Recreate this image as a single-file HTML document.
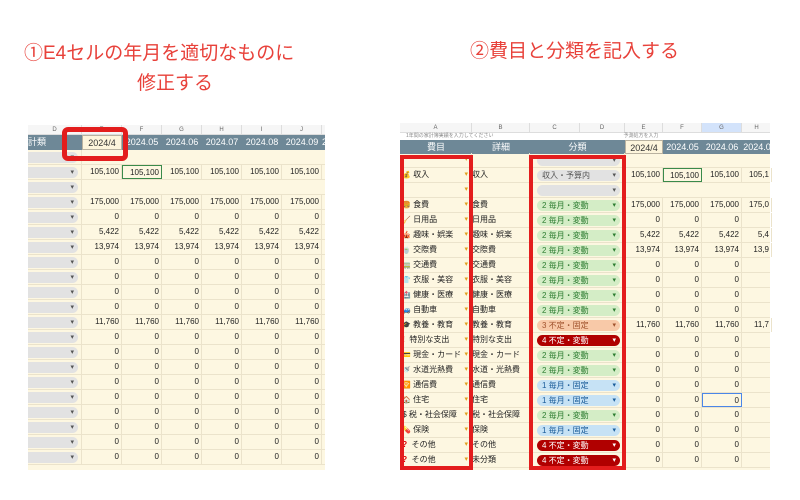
<!DOCTYPE html><html><head><meta charset="utf-8"><style>
*{margin:0;padding:0;box-sizing:border-box}
i{font-style:normal}
body{width:800px;height:500px;background:#fff;position:relative;overflow:hidden;font-family:"Liberation Sans","Noto Sans CJK JP",sans-serif}
.t{position:absolute;color:#e8413a;font-size:19px;white-space:nowrap}
.p{position:absolute;overflow:hidden;background:#fdf7e1}
.r{position:absolute;left:0;height:15px;border-bottom:1px solid #ebe3cb;width:100%;font-size:8px;color:#222}
.r span{position:absolute;top:0;height:100%;line-height:14px;white-space:nowrap;border-right:1px solid #ebe3cb;overflow:hidden}
.n{text-align:right;padding-right:2px}
.ch{position:absolute;left:0;width:100%;background:#f6f6f6;border-bottom:1px solid #ddd;font-size:6px;color:#666}
.ch span{position:absolute;top:0;text-align:center;border-right:1px solid #ddd;height:100%;line-height:10px}
.hb{position:absolute;left:0;width:100%;background:#6e8897;color:#fff;font-size:9px}
.hb span{position:absolute;top:0;height:100%;text-align:center;line-height:15px;white-space:nowrap;overflow:hidden}
.e4{background:#fdf5dc;color:#333;border:1px solid #b9b2a0}
.pl{position:absolute;top:2px;height:11px;border-radius:6px;line-height:11px;padding-left:5px;font-size:8px}
.pl:after{content:"▾";position:absolute;right:4px;top:0;font-size:7px}
.g{background:#e2e2e2;color:#555}.gr{background:#d4edc6;color:#2e7d32}.o{background:#f8c9a8;color:#a0522d}.rd{background:#b00000;color:#fff}.b{background:#c6e2f5;color:#1a5c99}
.box{position:absolute;border:4px solid #e31d1d}
.ar{color:#e0a020;position:absolute;right:3px;font-size:7px;font-weight:normal}
.ic{font-size:7px}
</style></head><body>
<div class="t" style="left:24px;top:38px">①E4セルの年月を適切なものに</div>
<div class="t" style="left:137px;top:68px">修正する</div>
<div class="t" style="left:470px;top:36px">②費目と分類を記入する</div>

<div class="p" style="left:28px;top:125px;width:297px;height:345px">
<div class="ch" style="top:0;height:10px"><span style="left:0;width:54px">D</span><span style="left:54px;width:40px">E</span><span style="left:94px;width:40px">F</span><span style="left:134px;width:40px">G</span><span style="left:174px;width:40px">H</span><span style="left:214px;width:40px">I</span><span style="left:254px;width:40px">J</span></div>
<div class="hb" style="top:10px;height:15px"><span style="left:0;width:54px;text-align:left">計類</span><span class="e4" style="left:54px;width:40px">2024/4</span><span style="left:94px;width:40px">2024.05</span><span style="left:134px;width:40px">2024.06</span><span style="left:174px;width:40px">2024.07</span><span style="left:214px;width:40px">2024.08</span><span style="left:254px;width:40px">2024.09</span><span style="left:294px;width:10px">20</span></div>
</div>

<div class="p" style="left:400px;top:123px;width:370px;height:347px">
<div class="ch" style="top:0;height:10px"><span style="left:0;width:72px">A</span><span style="left:72px;width:58px">B</span><span style="left:130px;width:50px">C</span><span style="left:180px;width:45px">D</span><span style="left:225px;width:38px">E</span><span style="left:263px;width:39px">F</span><span style="left:302px;width:40px;background:#d3e3fb">G</span><span style="left:342px;width:30px">H</span></div>
<div style="position:absolute;top:10px;left:0;width:100%;height:7px;background:#fff;font-size:5px;color:#888;line-height:7px;padding-left:6px">1年間の家計簿実績を入力してください　　　　　　　　　　　　　　　　　　　　　　　　　　予測処方を入力</div>
<div class="hb" style="top:17px;height:14px"><span style="left:0;width:72px">費目</span><span style="left:72px;width:58px">詳細</span><span style="left:130px;width:95px">分類</span><span class="e4" style="left:225px;width:38px">2024/4</span><span style="left:263px;width:39px">2024.05</span><span style="left:302px;width:40px">2024.06</span><span style="left:342px;width:30px">2024.0</span></div>
</div>

<div style="position:absolute;left:0;top:0">
<div style="position:absolute;left:28px;top:150px;width:297px">
<div class="r" style="top:0"><span style="left:0;width:54px"><i class="pl g" style="left:-6px;width:56px"></i></span></div>
<div class="r" style="top:15px"><span style="left:0;width:54px"><i class="pl g" style="left:-6px;width:56px"></i></span><span class="n" style="left:54px;width:40px">105,100</span><span class="n" style="left:94px;width:40px;border:1.5px solid #3a8a4a">105,100</span><span class="n" style="left:134px;width:40px">105,100</span><span class="n" style="left:174px;width:40px">105,100</span><span class="n" style="left:214px;width:40px">105,100</span><span class="n" style="left:254px;width:40px">105,100</span></div>
<div class="r" style="top:30px"><span style="left:0;width:54px"><i class="pl g" style="left:-6px;width:56px"></i></span></div>
<div class="r" style="top:45px"><span style="left:0;width:54px"><i class="pl g" style="left:-6px;width:56px"></i></span><span class="n" style="left:54px;width:40px">175,000</span><span class="n" style="left:94px;width:40px">175,000</span><span class="n" style="left:134px;width:40px">175,000</span><span class="n" style="left:174px;width:40px">175,000</span><span class="n" style="left:214px;width:40px">175,000</span><span class="n" style="left:254px;width:40px">175,000</span></div>
<div class="r" style="top:60px"><span style="left:0;width:54px"><i class="pl g" style="left:-6px;width:56px"></i></span><span class="n" style="left:54px;width:40px">0</span><span class="n" style="left:94px;width:40px">0</span><span class="n" style="left:134px;width:40px">0</span><span class="n" style="left:174px;width:40px">0</span><span class="n" style="left:214px;width:40px">0</span><span class="n" style="left:254px;width:40px">0</span></div>
<div class="r" style="top:75px"><span style="left:0;width:54px"><i class="pl g" style="left:-6px;width:56px"></i></span><span class="n" style="left:54px;width:40px">5,422</span><span class="n" style="left:94px;width:40px">5,422</span><span class="n" style="left:134px;width:40px">5,422</span><span class="n" style="left:174px;width:40px">5,422</span><span class="n" style="left:214px;width:40px">5,422</span><span class="n" style="left:254px;width:40px">5,422</span></div>
<div class="r" style="top:90px"><span style="left:0;width:54px"><i class="pl g" style="left:-6px;width:56px"></i></span><span class="n" style="left:54px;width:40px">13,974</span><span class="n" style="left:94px;width:40px">13,974</span><span class="n" style="left:134px;width:40px">13,974</span><span class="n" style="left:174px;width:40px">13,974</span><span class="n" style="left:214px;width:40px">13,974</span><span class="n" style="left:254px;width:40px">13,974</span></div>
<div class="r" style="top:105px"><span style="left:0;width:54px"><i class="pl g" style="left:-6px;width:56px"></i></span><span class="n" style="left:54px;width:40px">0</span><span class="n" style="left:94px;width:40px">0</span><span class="n" style="left:134px;width:40px">0</span><span class="n" style="left:174px;width:40px">0</span><span class="n" style="left:214px;width:40px">0</span><span class="n" style="left:254px;width:40px">0</span></div>
<div class="r" style="top:120px"><span style="left:0;width:54px"><i class="pl g" style="left:-6px;width:56px"></i></span><span class="n" style="left:54px;width:40px">0</span><span class="n" style="left:94px;width:40px">0</span><span class="n" style="left:134px;width:40px">0</span><span class="n" style="left:174px;width:40px">0</span><span class="n" style="left:214px;width:40px">0</span><span class="n" style="left:254px;width:40px">0</span></div>
<div class="r" style="top:135px"><span style="left:0;width:54px"><i class="pl g" style="left:-6px;width:56px"></i></span><span class="n" style="left:54px;width:40px">0</span><span class="n" style="left:94px;width:40px">0</span><span class="n" style="left:134px;width:40px">0</span><span class="n" style="left:174px;width:40px">0</span><span class="n" style="left:214px;width:40px">0</span><span class="n" style="left:254px;width:40px">0</span></div>
<div class="r" style="top:150px"><span style="left:0;width:54px"><i class="pl g" style="left:-6px;width:56px"></i></span><span class="n" style="left:54px;width:40px">0</span><span class="n" style="left:94px;width:40px">0</span><span class="n" style="left:134px;width:40px">0</span><span class="n" style="left:174px;width:40px">0</span><span class="n" style="left:214px;width:40px">0</span><span class="n" style="left:254px;width:40px">0</span></div>
<div class="r" style="top:165px"><span style="left:0;width:54px"><i class="pl g" style="left:-6px;width:56px"></i></span><span class="n" style="left:54px;width:40px">11,760</span><span class="n" style="left:94px;width:40px">11,760</span><span class="n" style="left:134px;width:40px">11,760</span><span class="n" style="left:174px;width:40px">11,760</span><span class="n" style="left:214px;width:40px">11,760</span><span class="n" style="left:254px;width:40px">11,760</span></div>
<div class="r" style="top:180px"><span style="left:0;width:54px"><i class="pl g" style="left:-6px;width:56px"></i></span><span class="n" style="left:54px;width:40px">0</span><span class="n" style="left:94px;width:40px">0</span><span class="n" style="left:134px;width:40px">0</span><span class="n" style="left:174px;width:40px">0</span><span class="n" style="left:214px;width:40px">0</span><span class="n" style="left:254px;width:40px">0</span></div>
<div class="r" style="top:195px"><span style="left:0;width:54px"><i class="pl g" style="left:-6px;width:56px"></i></span><span class="n" style="left:54px;width:40px">0</span><span class="n" style="left:94px;width:40px">0</span><span class="n" style="left:134px;width:40px">0</span><span class="n" style="left:174px;width:40px">0</span><span class="n" style="left:214px;width:40px">0</span><span class="n" style="left:254px;width:40px">0</span></div>
<div class="r" style="top:210px"><span style="left:0;width:54px"><i class="pl g" style="left:-6px;width:56px"></i></span><span class="n" style="left:54px;width:40px">0</span><span class="n" style="left:94px;width:40px">0</span><span class="n" style="left:134px;width:40px">0</span><span class="n" style="left:174px;width:40px">0</span><span class="n" style="left:214px;width:40px">0</span><span class="n" style="left:254px;width:40px">0</span></div>
<div class="r" style="top:225px"><span style="left:0;width:54px"><i class="pl g" style="left:-6px;width:56px"></i></span><span class="n" style="left:54px;width:40px">0</span><span class="n" style="left:94px;width:40px">0</span><span class="n" style="left:134px;width:40px">0</span><span class="n" style="left:174px;width:40px">0</span><span class="n" style="left:214px;width:40px">0</span><span class="n" style="left:254px;width:40px">0</span></div>
<div class="r" style="top:240px"><span style="left:0;width:54px"><i class="pl g" style="left:-6px;width:56px"></i></span><span class="n" style="left:54px;width:40px">0</span><span class="n" style="left:94px;width:40px">0</span><span class="n" style="left:134px;width:40px">0</span><span class="n" style="left:174px;width:40px">0</span><span class="n" style="left:214px;width:40px">0</span><span class="n" style="left:254px;width:40px">0</span></div>
<div class="r" style="top:255px"><span style="left:0;width:54px"><i class="pl g" style="left:-6px;width:56px"></i></span><span class="n" style="left:54px;width:40px">0</span><span class="n" style="left:94px;width:40px">0</span><span class="n" style="left:134px;width:40px">0</span><span class="n" style="left:174px;width:40px">0</span><span class="n" style="left:214px;width:40px">0</span><span class="n" style="left:254px;width:40px">0</span></div>
<div class="r" style="top:270px"><span style="left:0;width:54px"><i class="pl g" style="left:-6px;width:56px"></i></span><span class="n" style="left:54px;width:40px">0</span><span class="n" style="left:94px;width:40px">0</span><span class="n" style="left:134px;width:40px">0</span><span class="n" style="left:174px;width:40px">0</span><span class="n" style="left:214px;width:40px">0</span><span class="n" style="left:254px;width:40px">0</span></div>
<div class="r" style="top:285px"><span style="left:0;width:54px"><i class="pl g" style="left:-6px;width:56px"></i></span><span class="n" style="left:54px;width:40px">0</span><span class="n" style="left:94px;width:40px">0</span><span class="n" style="left:134px;width:40px">0</span><span class="n" style="left:174px;width:40px">0</span><span class="n" style="left:214px;width:40px">0</span><span class="n" style="left:254px;width:40px">0</span></div>
<div class="r" style="top:300px"><span style="left:0;width:54px"><i class="pl g" style="left:-6px;width:56px"></i></span><span class="n" style="left:54px;width:40px">0</span><span class="n" style="left:94px;width:40px">0</span><span class="n" style="left:134px;width:40px">0</span><span class="n" style="left:174px;width:40px">0</span><span class="n" style="left:214px;width:40px">0</span><span class="n" style="left:254px;width:40px">0</span></div>
</div>

<div style="position:absolute;left:400px;top:153px;width:370px">
<div class="r" style="top:0"><span style="left:0;width:72px"><b class="ar">▾</b></span><span style="left:72px;width:58px"></span><span style="left:130px;width:95px"><i class="pl g" style="left:7px;width:83px"></i></span></div>
<div class="r" style="top:15px"><span style="left:0;width:72px">&nbsp;<i class="ic">💰</i> 収入<b class="ar">▾</b></span><span style="left:72px;width:58px">収入</span><span style="left:130px;width:95px"><i class="pl g" style="left:7px;width:83px">収入・予算内</i></span><span class="n" style="left:225px;width:38px">105,100</span><span class="n" style="left:263px;width:39px;border:1.5px solid #3a8a4a">105,100</span><span class="n" style="left:302px;width:40px">105,100</span><span class="n" style="left:342px;width:30px">105,1</span></div>
<div class="r" style="top:30px"><span style="left:0;width:72px"><b class="ar">▾</b></span><span style="left:72px;width:58px"></span><span style="left:130px;width:95px"><i class="pl g" style="left:7px;width:83px"></i></span></div>
<div class="r" style="top:45px"><span style="left:0;width:72px">&nbsp;<i class="ic">🍔</i> 食費<b class="ar">▾</b></span><span style="left:72px;width:58px">食費</span><span style="left:130px;width:95px"><i class="pl gr" style="left:7px;width:83px">2 毎月・変動</i></span><span class="n" style="left:225px;width:38px">175,000</span><span class="n" style="left:263px;width:39px">175,000</span><span class="n" style="left:302px;width:40px">175,000</span><span class="n" style="left:342px;width:30px">175,0</span></div>
<div class="r" style="top:60px"><span style="left:0;width:72px">&nbsp;<i class="ic">🧹</i> 日用品<b class="ar">▾</b></span><span style="left:72px;width:58px">日用品</span><span style="left:130px;width:95px"><i class="pl gr" style="left:7px;width:83px">2 毎月・変動</i></span><span class="n" style="left:225px;width:38px">0</span><span class="n" style="left:263px;width:39px">0</span><span class="n" style="left:302px;width:40px">0</span><span class="n" style="left:342px;width:30px"></span></div>
<div class="r" style="top:75px"><span style="left:0;width:72px">&nbsp;<i class="ic">🎪</i> 趣味・娯楽<b class="ar">▾</b></span><span style="left:72px;width:58px">趣味・娯楽</span><span style="left:130px;width:95px"><i class="pl gr" style="left:7px;width:83px">2 毎月・変動</i></span><span class="n" style="left:225px;width:38px">5,422</span><span class="n" style="left:263px;width:39px">5,422</span><span class="n" style="left:302px;width:40px">5,422</span><span class="n" style="left:342px;width:30px">5,4</span></div>
<div class="r" style="top:90px"><span style="left:0;width:72px">&nbsp;<i class="ic">🍵</i> 交際費<b class="ar">▾</b></span><span style="left:72px;width:58px">交際費</span><span style="left:130px;width:95px"><i class="pl gr" style="left:7px;width:83px">2 毎月・変動</i></span><span class="n" style="left:225px;width:38px">13,974</span><span class="n" style="left:263px;width:39px">13,974</span><span class="n" style="left:302px;width:40px">13,974</span><span class="n" style="left:342px;width:30px">13,9</span></div>
<div class="r" style="top:105px"><span style="left:0;width:72px">&nbsp;<i class="ic">🚃</i> 交通費<b class="ar">▾</b></span><span style="left:72px;width:58px">交通費</span><span style="left:130px;width:95px"><i class="pl gr" style="left:7px;width:83px">2 毎月・変動</i></span><span class="n" style="left:225px;width:38px">0</span><span class="n" style="left:263px;width:39px">0</span><span class="n" style="left:302px;width:40px">0</span></div>
<div class="r" style="top:120px"><span style="left:0;width:72px">&nbsp;<i class="ic">👕</i> 衣服・美容<b class="ar">▾</b></span><span style="left:72px;width:58px">衣服・美容</span><span style="left:130px;width:95px"><i class="pl gr" style="left:7px;width:83px">2 毎月・変動</i></span><span class="n" style="left:225px;width:38px">0</span><span class="n" style="left:263px;width:39px">0</span><span class="n" style="left:302px;width:40px">0</span></div>
<div class="r" style="top:135px"><span style="left:0;width:72px">&nbsp;<i class="ic">🏥</i> 健康・医療<b class="ar">▾</b></span><span style="left:72px;width:58px">健康・医療</span><span style="left:130px;width:95px"><i class="pl gr" style="left:7px;width:83px">2 毎月・変動</i></span><span class="n" style="left:225px;width:38px">0</span><span class="n" style="left:263px;width:39px">0</span><span class="n" style="left:302px;width:40px">0</span></div>
<div class="r" style="top:150px"><span style="left:0;width:72px">&nbsp;<i class="ic">🚙</i> 自動車<b class="ar">▾</b></span><span style="left:72px;width:58px">自動車</span><span style="left:130px;width:95px"><i class="pl gr" style="left:7px;width:83px">2 毎月・変動</i></span><span class="n" style="left:225px;width:38px">0</span><span class="n" style="left:263px;width:39px">0</span><span class="n" style="left:302px;width:40px">0</span></div>
<div class="r" style="top:165px"><span style="left:0;width:72px">&nbsp;<i class="ic">🎓</i> 教養・教育<b class="ar">▾</b></span><span style="left:72px;width:58px">教養・教育</span><span style="left:130px;width:95px"><i class="pl o" style="left:7px;width:83px">3 不定・固定</i></span><span class="n" style="left:225px;width:38px">11,760</span><span class="n" style="left:263px;width:39px">11,760</span><span class="n" style="left:302px;width:40px">11,760</span><span class="n" style="left:342px;width:30px">11,7</span></div>
<div class="r" style="top:180px"><span style="left:0;width:72px">&nbsp;<b style="color:#d00">!</b>&nbsp; 特別な支出<b class="ar">▾</b></span><span style="left:72px;width:58px">特別な支出</span><span style="left:130px;width:95px"><i class="pl rd" style="left:7px;width:83px">4 不定・変動</i></span><span class="n" style="left:225px;width:38px">0</span><span class="n" style="left:263px;width:39px">0</span><span class="n" style="left:302px;width:40px">0</span></div>
<div class="r" style="top:195px"><span style="left:0;width:72px">&nbsp;<i class="ic">💳</i> 現金・カード<b class="ar">▾</b></span><span style="left:72px;width:58px">現金・カード</span><span style="left:130px;width:95px"><i class="pl gr" style="left:7px;width:83px">2 毎月・変動</i></span><span class="n" style="left:225px;width:38px">0</span><span class="n" style="left:263px;width:39px">0</span><span class="n" style="left:302px;width:40px">0</span></div>
<div class="r" style="top:210px"><span style="left:0;width:72px">&nbsp;<i class="ic">🚿</i> 水道光熱費<b class="ar">▾</b></span><span style="left:72px;width:58px">水道・光熱費</span><span style="left:130px;width:95px"><i class="pl gr" style="left:7px;width:83px">2 毎月・変動</i></span><span class="n" style="left:225px;width:38px">0</span><span class="n" style="left:263px;width:39px">0</span><span class="n" style="left:302px;width:40px">0</span></div>
<div class="r" style="top:225px"><span style="left:0;width:72px">&nbsp;<i class="ic">🛜</i> 通信費<b class="ar">▾</b></span><span style="left:72px;width:58px">通信費</span><span style="left:130px;width:95px"><i class="pl b" style="left:7px;width:83px">1 毎月・固定</i></span><span class="n" style="left:225px;width:38px">0</span><span class="n" style="left:263px;width:39px">0</span><span class="n" style="left:302px;width:40px">0</span></div>
<div class="r" style="top:240px"><span style="left:0;width:72px">&nbsp;<i class="ic">🏠</i> 住宅<b class="ar">▾</b></span><span style="left:72px;width:58px">住宅</span><span style="left:130px;width:95px"><i class="pl b" style="left:7px;width:83px">1 毎月・固定</i></span><span class="n" style="left:225px;width:38px">0</span><span class="n" style="left:263px;width:39px">0</span><span class="n" style="left:302px;width:40px;border:1.5px solid #4a86e8">0</span></div>
<div class="r" style="top:255px"><span style="left:0;width:72px">&nbsp;$ 税・社会保障<b class="ar">▾</b></span><span style="left:72px;width:58px">税・社会保障</span><span style="left:130px;width:95px"><i class="pl gr" style="left:7px;width:83px">2 毎月・変動</i></span><span class="n" style="left:225px;width:38px">0</span><span class="n" style="left:263px;width:39px">0</span><span class="n" style="left:302px;width:40px">0</span></div>
<div class="r" style="top:270px"><span style="left:0;width:72px">&nbsp;<i class="ic">💊</i> 保険<b class="ar">▾</b></span><span style="left:72px;width:58px">保険</span><span style="left:130px;width:95px"><i class="pl b" style="left:7px;width:83px">1 毎月・固定</i></span><span class="n" style="left:225px;width:38px">0</span><span class="n" style="left:263px;width:39px">0</span><span class="n" style="left:302px;width:40px">0</span></div>
<div class="r" style="top:285px"><span style="left:0;width:72px">&nbsp;<b style="color:#d00">?</b>&nbsp; その他<b class="ar">▾</b></span><span style="left:72px;width:58px">その他</span><span style="left:130px;width:95px"><i class="pl rd" style="left:7px;width:83px">4 不定・変動</i></span><span class="n" style="left:225px;width:38px">0</span><span class="n" style="left:263px;width:39px">0</span><span class="n" style="left:302px;width:40px">0</span></div>
<div class="r" style="top:300px"><span style="left:0;width:72px">&nbsp;<b style="color:#d00">?</b>&nbsp; その他<b class="ar">▾</b></span><span style="left:72px;width:58px">未分類</span><span style="left:130px;width:95px"><i class="pl rd" style="left:7px;width:83px">4 不定・変動</i></span><span class="n" style="left:225px;width:38px">0</span><span class="n" style="left:263px;width:39px">0</span><span class="n" style="left:302px;width:40px">0</span></div>
</div>
</div>
<div class="box" style="left:62px;top:127px;width:66px;height:34px;border-radius:6px;border-width:5px"></div>
<div class="box" style="left:400px;top:155px;width:73px;height:315px"></div>
<div class="box" style="left:529px;top:155px;width:97px;height:315px"></div>
</body></html>
